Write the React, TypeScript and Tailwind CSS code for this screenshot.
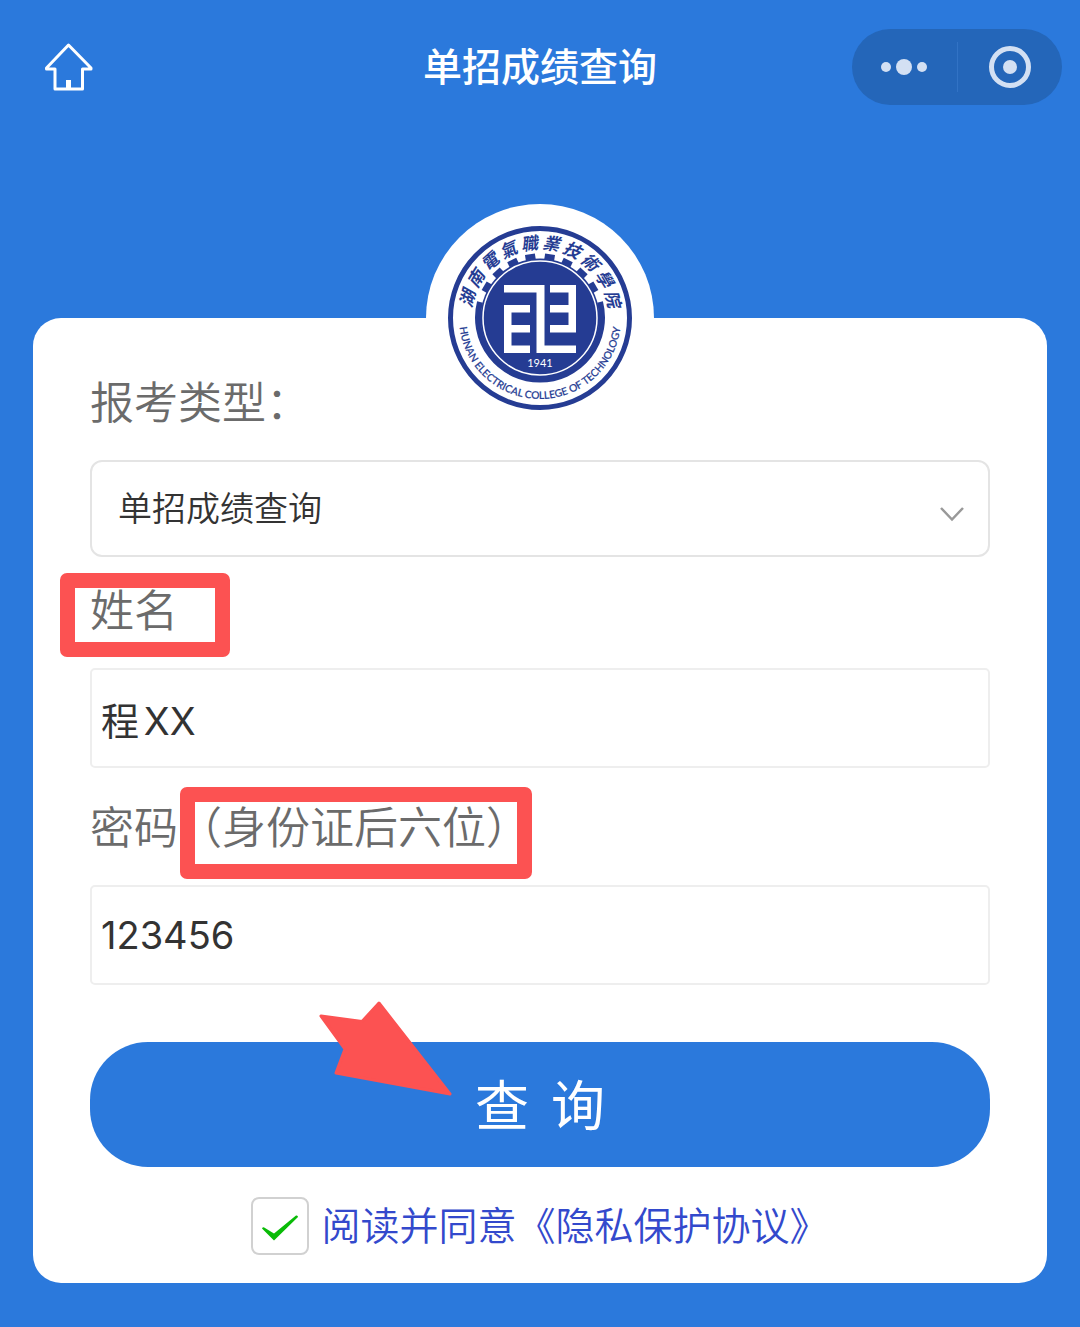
import { useState } from "react";

const SCHOOL_NAME = "湖南電氣職業技術學院".split("");
const GEAR_ANGLES = [-60, -43, -26, -9, 9, 26, 43, 60];

function HomeIcon() {
  return (
    <svg
      viewBox="0 0 48 48"
      className="w-12 h-12"
      fill="none"
      stroke="currentColor"
      strokeWidth="3"
      strokeLinejoin="round"
      strokeLinecap="round"
    >
      <path d="M23.500 2 L46 25 V26 H37.500 V46 H10 V26 H1.500 V25 Z" />
      <path d="M23.500 37 V46" strokeWidth="5" strokeLinecap="butt" />
    </svg>
  );
}

function SchoolLogo() {
  return (
    <svg viewBox="-92 -92 184 184" className="w-[184px] h-[184px]">
      <circle r="89.500" fill="#fff" stroke="#253c93" strokeWidth="5" />

      {/* gear: solid lower rim, teeth on the upper half */}
      <circle r="59.500" fill="#253c93" />
      <path
        d="M-60 -16 A62 62 0 1 0 60 -16"
        fill="none"
        stroke="#253c93"
        strokeWidth="6"
      />
      {GEAR_ANGLES.map((angle) => (
        <rect
          key={angle}
          x="-5"
          y="-64.500"
          width="10"
          height="7"
          fill="#253c93"
          transform={`rotate(${angle})`}
        />
      ))}
      <circle r="57" fill="none" stroke="#fff" strokeWidth="1.500" />

      <g fill="#fff">
        <path d="M-36 -33 H4.500 V27.500 H36 V35 H-3.500 V-25.500 H-36 Z" />
        <path d="M-36 -13 H-10 V-5.500 H-28.500 V7 H-10 V14.500 H-28.500 V27.500 H-10 V35 H-36 Z" />
        <path d="M36 -33 H10 V-25.500 H28.500 V-13 H10 V-5.500 H28.500 V7 H10 V14.500 H36 Z" />
      </g>
      <text
        y="49"
        textAnchor="middle"
        fontSize="11"
        fill="#fff"
        className="font-['Lato',sans-serif]"
      >
        1941
      </text>

      {SCHOOL_NAME.map((char, i) => (
        <text
          key={char}
          y="-69"
          textAnchor="middle"
          fontSize="17"
          fill="#253c93"
          transform={`rotate(${-75 + i * 16.7})`}
          className="font-['Noto_Sans_CJK_TC',sans-serif] font-bold italic"
        >
          {char}
        </text>
      ))}

      <path id="motto-arc" d="M-81 0 A81 81 0 0 0 81 0" fill="none" />
      <text
        textAnchor="middle"
        fontSize="10.3"
        fill="#253c93"
        stroke="#253c93"
        strokeWidth="0.2"
        className="font-['Lato',sans-serif] font-medium"
      >
        <textPath href="#motto-arc" startOffset="50%">
          HUNAN ELECTRICAL COLLEGE OF TECHNOLOGY
        </textPath>
      </text>
    </svg>
  );
}

function Header() {
  return (
    <header className="grid grid-cols-[1fr_auto_1fr] items-center h-[134px] px-[18px] text-white">
      <button
        type="button"
        aria-label="首页"
        className="justify-self-start pl-[27px]"
      >
        <HomeIcon />
      </button>
      <h1 className="text-[39px] leading-[56px] font-medium">单招成绩查询</h1>
      <div className="justify-self-end flex items-center w-[210px] h-[76px] rounded-full bg-[#2466b9] text-[#d3e0f3]">
        <button
          type="button"
          aria-label="更多"
          className="flex-1 flex items-center justify-center gap-[5px]"
        >
          <span className="w-[10px] h-[10px] rounded-full bg-current"></span>
          <span className="w-4 h-4 rounded-full bg-current"></span>
          <span className="w-[10px] h-[10px] rounded-full bg-current"></span>
        </button>
        <div className="w-px h-[50px] bg-[#3273c5]"></div>
        <button
          type="button"
          aria-label="关闭"
          className="flex-1 flex items-center justify-center"
        >
          <span className="flex items-center justify-center w-[42px] h-[42px] rounded-full border-[5px] border-current">
            <span className="w-[14px] h-[14px] rounded-full bg-current"></span>
          </span>
        </button>
      </div>
    </header>
  );
}

function App() {
  const [type, setType] = useState("score");
  const [name, setName] = useState("程XX");
  const [password, setPassword] = useState("123456");
  const [agreed, setAgreed] = useState(true);

  return (
    <div className="min-h-screen pb-11 bg-[#2b79dc] font-['Inter','Noto_Sans_CJK_SC',sans-serif]">
      <Header />

      <main className="relative mt-[184px] mx-[33px] px-[57px] pt-[53px] pb-7 bg-white rounded-[28px]">
        <div className="absolute left-1/2 -top-[114px] -translate-x-1/2 flex items-center justify-center w-[228px] h-[228px] rounded-full bg-white">
          <SchoolLogo />
        </div>

        <form onSubmit={(e) => e.preventDefault()}>
          <label
            htmlFor="type"
            className="block mb-[25px] text-[44px] leading-[64px] font-[350] text-[#6b6b6b]"
          >
            报考类型：
          </label>
          <div className="relative mb-[22px]">
            <select
              id="type"
              value={type}
              onChange={(e) => setType(e.target.value)}
              className="block appearance-none w-full h-[97px] px-[26px] border-2 border-[#e4e4e4] rounded-xl bg-white text-[34px] font-[350] text-[#333]"
            >
              <option value="score">单招成绩查询</option>
            </select>
            <svg
              viewBox="0 0 26 16"
              className="absolute right-[25px] top-[46px] w-[26px] h-4 pointer-events-none"
              fill="none"
              stroke="#999"
              strokeWidth="2.5"
            >
              <path d="M2 2 L13 13.500 L24 2" />
            </svg>
          </div>

          <label
            htmlFor="name"
            className="relative block w-fit mb-[25px] text-[44px] leading-[64px] font-[350] text-[#6b6b6b]"
          >
            姓名
            <span className="absolute -top-[6px] -left-[30px] w-[170px] h-[84px] border-[15px] border-[#fc5252] rounded-[7px]"></span>
          </label>
          <input
            id="name"
            type="text"
            value={name}
            onChange={(e) => setName(e.target.value)}
            className="block w-full h-[100px] mb-7 px-[9px] border-2 border-[#eee] rounded-[5px] text-[38px] text-[#333] [text-autospace:normal]"
          />

          <label
            htmlFor="password"
            className="block w-fit mb-[25px] text-[44px] leading-[64px] font-[350] text-[#6b6b6b]"
          >
            密码
            <span className="relative">
              （身份证后六位）
              <span className="absolute -top-[14px] left-[2px] w-[352px] h-[92px] border-[15px] border-[#fc5252] rounded-[7px]"></span>
            </span>
          </label>
          <input
            id="password"
            type="text"
            value={password}
            onChange={(e) => setPassword(e.target.value)}
            className="block w-full h-[100px] mb-[57px] px-[9px] border-2 border-[#eee] rounded-[5px] text-[38px] text-[#333]"
          />

          <div className="relative">
            <button
              type="submit"
              className="flex items-center justify-center gap-[22px] w-full h-[125px] pt-1 rounded-[58px] bg-[#2b79dc] text-[54px] text-white"
            >
              <span>查</span>
              <span>询</span>
            </button>
            <svg
              viewBox="0 0 134 96"
              className="absolute left-[229px] -top-[42px] w-[134px] h-24 pointer-events-none"
              fill="#fc5252"
              stroke="#fc5252"
              strokeWidth="3"
              strokeLinejoin="round"
            >
              <path d="M2 16 L43 21.500 L60 3 L131 94 L17 73 L26 49 Z" />
            </svg>
          </div>

          <div className="flex items-center justify-center gap-3 mt-[30px]">
            <div className="relative">
              <input
                id="agree"
                type="checkbox"
                checked={agreed}
                onChange={(e) => setAgreed(e.target.checked)}
                className="block appearance-none w-[58px] h-[58px] border-2 border-[#d1d1d1] rounded-lg bg-white"
              />
              {agreed && (
                <svg
                  viewBox="0 0 58 58"
                  className="absolute inset-0 w-[58px] h-[58px] pointer-events-none"
                >
                  <path
                    d="M11 31.500 Q12 29.500 14 31 L23 36.500 L45 18.500 Q47 18 47 20 L23 43.500 Z"
                    fill="#09bb07"
                  />
                </svg>
              )}
            </div>
            <div className="text-[39px] leading-[58px] text-[#3349cc] font-[350]">
              <label htmlFor="agree">阅读并同意</label>
              <a href="#privacy">《隐私保护协议》</a>
            </div>
          </div>
        </form>
      </main>
    </div>
  );
}

export default App;
